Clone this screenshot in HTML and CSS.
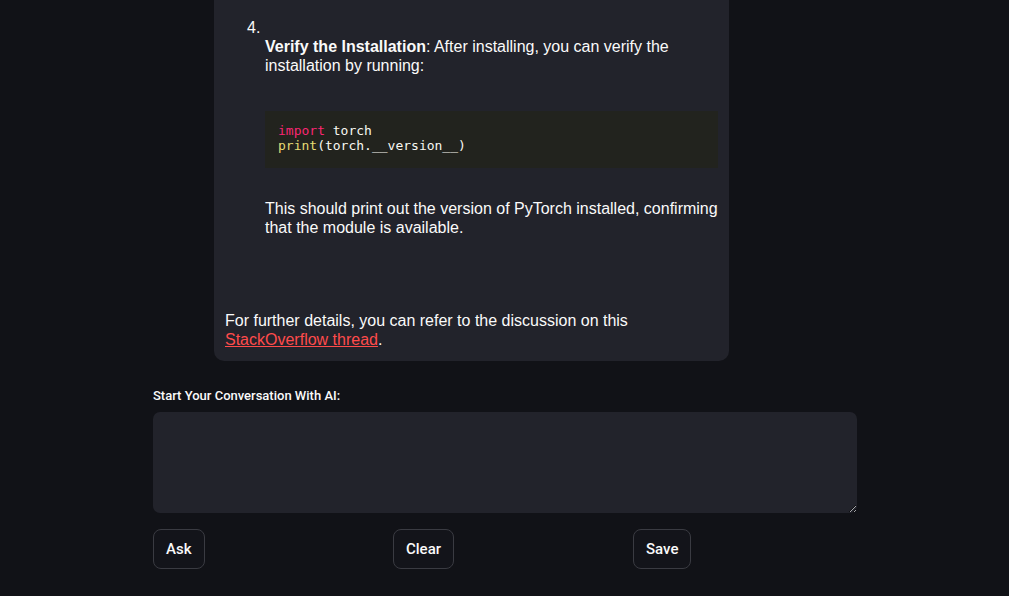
FILE: index.html
```html
<!DOCTYPE html>
<html>
<head>
<meta charset="utf-8">
<link rel="stylesheet" href="styles.css">
</head>
<body>
<main class="main">
  <div class="card">
    <div class="item">
      <div class="num">4.</div>
      <div class="item-body">
        <p class="text"><strong>Verify the Installation</strong>: After installing, you can verify the installation by running:</p>
        <pre class="code"><span class="kw">import</span> torch
<span class="fn">print</span>(torch.__version__)</pre>
        <p class="text after">This should print out the version of PyTorch installed, confirming that the module is available.</p>
      </div>
    </div>
    <p class="text final">For further details, you can refer to the discussion on this <a class="link" href="#">StackOverflow thread</a>.</p>
  </div>

  <label class="label" for="q">Start Your Conversation With AI:</label>
  <textarea id="q" class="input"></textarea>

  <div class="buttons">
    <div class="cell"><button class="btn">Ask</button></div>
    <div class="cell"><button class="btn">Clear</button></div>
    <div class="cell"><button class="btn">Save</button></div>
  </div>
</main>
</body>
</html>
```
FILE: styles.css
```css
html, body {
  margin: 0;
  padding: 0;
  background: #111217;
  color: #fafafa;
  font-family: "Liberation Sans", Arial, sans-serif;
}
.main {
  width: 704px;
  margin-left: 153px;
  display: flex;
  flex-direction: column;
}
.card {
  margin-left: 61px;
  width: 515px;
  box-sizing: border-box;
  background: #22232b;
  border-radius: 0 0 10px 10px;
  padding: 18px 11px 12px;
}
.text {
  margin: 0;
  font-size: 16px;
  line-height: 19.2px;
}
.num {
  font-size: 16px;
  line-height: 19.2px;
  padding-left: 22px;
}
.item-body {
  margin-left: 40px;
}
.code {
  margin: 35px 0 0;
  background: #22231e;
  padding: 12px 13px 15px;
  font-family: "DejaVu Sans Mono", monospace;
  font-size: 13px;
  line-height: 15px;
  color: #f8f8f2;
}
.kw { color: #f92672; }
.fn { color: #e6db74; }
.after { margin-top: 31px; }
.final { margin-top: 74px; }
.link { color: #ff4b4b; text-decoration: underline; }
.label {
  margin-top: 26px;
  font-family: "Roboto", sans-serif;
  font-weight: 500;
  font-size: 13px;
  line-height: 18px;
  color: #fafafa;
}
.input {
  margin-top: 7px;
  height: 101px;
  box-sizing: border-box;
  background: #22232b;
  border: none;
  border-radius: 7px;
  color: #fafafa;
  outline: none;
  resize: vertical;
}
.buttons {
  margin-top: 16px;
  display: grid;
  grid-template-columns: repeat(3, 1fr);
  gap: 16px;
}
.btn {
  height: 40px;
  padding: 0 12px;
  background: #13141a;
  border: 1px solid #3a3b42;
  border-radius: 8px;
  color: #fafafa;
  font-family: "Roboto", sans-serif;
  font-weight: 500;
  font-size: 15px;
}
```
